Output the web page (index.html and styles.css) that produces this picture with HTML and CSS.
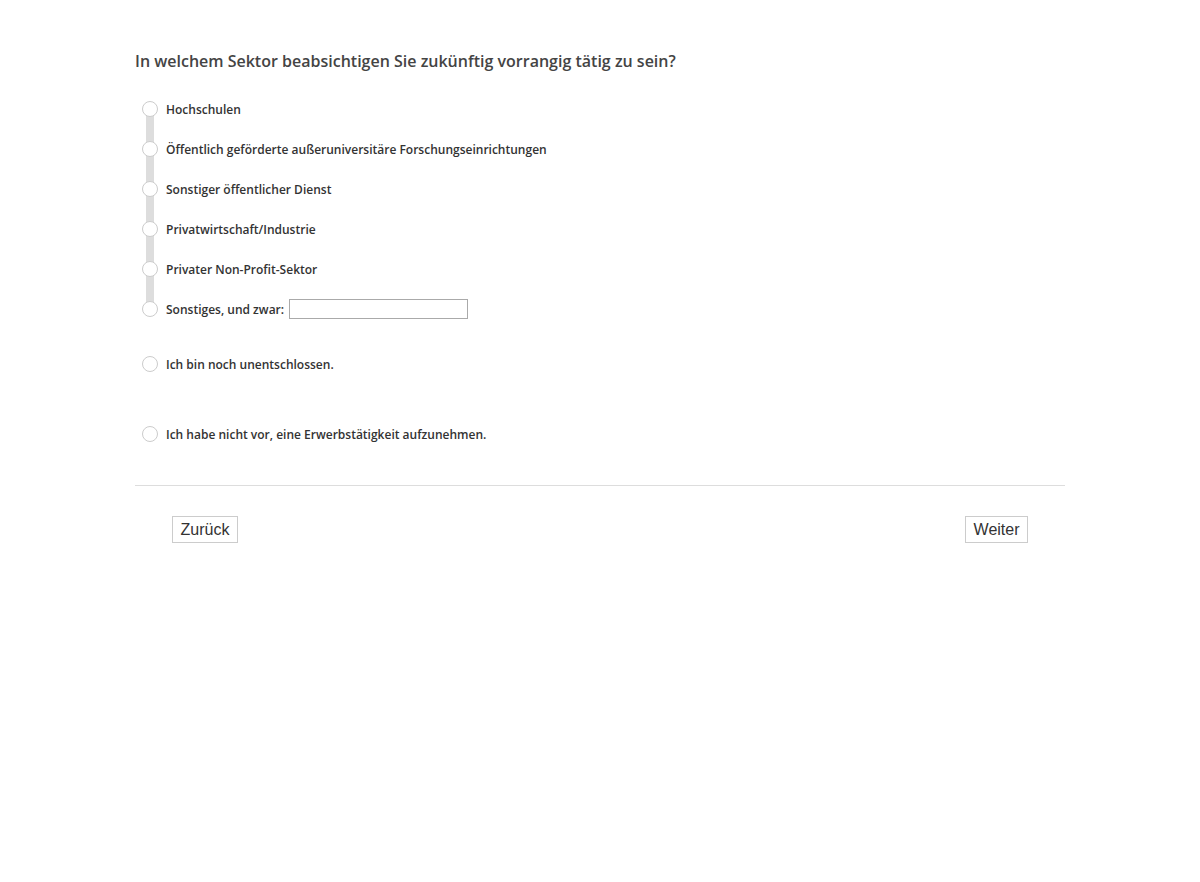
FILE: index.html
```html
<!DOCTYPE html>
<html lang="de">
<head>
<meta charset="utf-8">
<title>Befragung</title>
<link rel="stylesheet" href="styles.css">
</head>
<body>
<main class="page">
  <form class="question">
    <h1 class="question-title">In welchem Sektor beabsichtigen Sie zukünftig vorrangig tätig zu sein?</h1>

    <div class="option-group linked">
      <label class="option"><span class="radio"></span><span class="label">Hochschulen</span></label>
      <label class="option"><span class="radio"></span><span class="label">Öffentlich geförderte außeruniversitäre Forschungseinrichtungen</span></label>
      <label class="option"><span class="radio"></span><span class="label">Sonstiger öffentlicher Dienst</span></label>
      <label class="option"><span class="radio"></span><span class="label">Privatwirtschaft/Industrie</span></label>
      <label class="option"><span class="radio"></span><span class="label">Privater Non-Profit-Sektor</span></label>
      <label class="option"><span class="radio"></span><span class="label">Sonstiges, und zwar:</span><input class="other-input" type="text"></label>
    </div>

    <div class="option-group single first-extra">
      <label class="option"><span class="radio"></span><span class="label">Ich bin noch unentschlossen.</span></label>
    </div>

    <div class="option-group single second-extra">
      <label class="option"><span class="radio"></span><span class="label">Ich habe nicht vor, eine Erwerbstätigkeit aufzunehmen.</span></label>
    </div>
  </form>

  <hr class="divider">

  <nav class="nav-buttons">
    <button type="button" class="btn">Zurück</button>
    <button type="button" class="btn">Weiter</button>
  </nav>
</main>
</body>
</html>
```

FILE: styles.css
```css
html, body {
  margin: 0;
  padding: 0;
  background: #fff;
}

body {
  font-family: "Open Sans", "Liberation Sans", sans-serif;
  color: #444;
}

.page {
  width: 930px;
  margin: 0 auto;
  padding-top: 50px;
}

.question-title {
  margin: 0 0 27px 0;
  font-size: 16px;
  font-weight: 600;
  line-height: 22px;
  color: #444;
}

.option-group {
  position: relative;
  display: flex;
  flex-direction: column;
  gap: 20px;
  padding-left: 7px;
}

/* grey rail connecting the radios of one group */
.option-group.linked::before {
  content: "";
  position: absolute;
  left: 11px;
  top: 10px;
  bottom: 10px;
  width: 8px;
  background: #ddd;
}

.option {
  position: relative;
  display: flex;
  align-items: center;
  height: 20px;
  font-size: 12px;
  font-weight: 600;
  color: #333;
}

.radio {
  box-sizing: border-box;
  width: 16px;
  height: 16px;
  border: 1px solid #ccc;
  border-radius: 50%;
  background: #fff;
  margin-right: 8px;
  flex: none;
}

.other-input {
  box-sizing: border-box;
  width: 179px;
  height: 20px;
  margin: 0 0 0 5px;
  border: 1px solid #aaa;
  padding: 0 3px;
  font: inherit;
}

.first-extra {
  margin-top: 35px;
}

.second-extra {
  margin-top: 50px;
}

.divider {
  border: 0;
  border-top: 1px solid #ddd;
  margin: 41px 0 0 0;
}

.nav-buttons {
  display: flex;
  justify-content: space-between;
  padding: 30px 37px 0 37px;
}

.btn {
  font-family: "Liberation Sans", Arial, sans-serif;
  font-size: 16px;
  color: #333;
  background: #fff;
  border: 1px solid #ccc;
  border-radius: 0;
  height: 27px;
  padding: 0 7.5px;
}
```
